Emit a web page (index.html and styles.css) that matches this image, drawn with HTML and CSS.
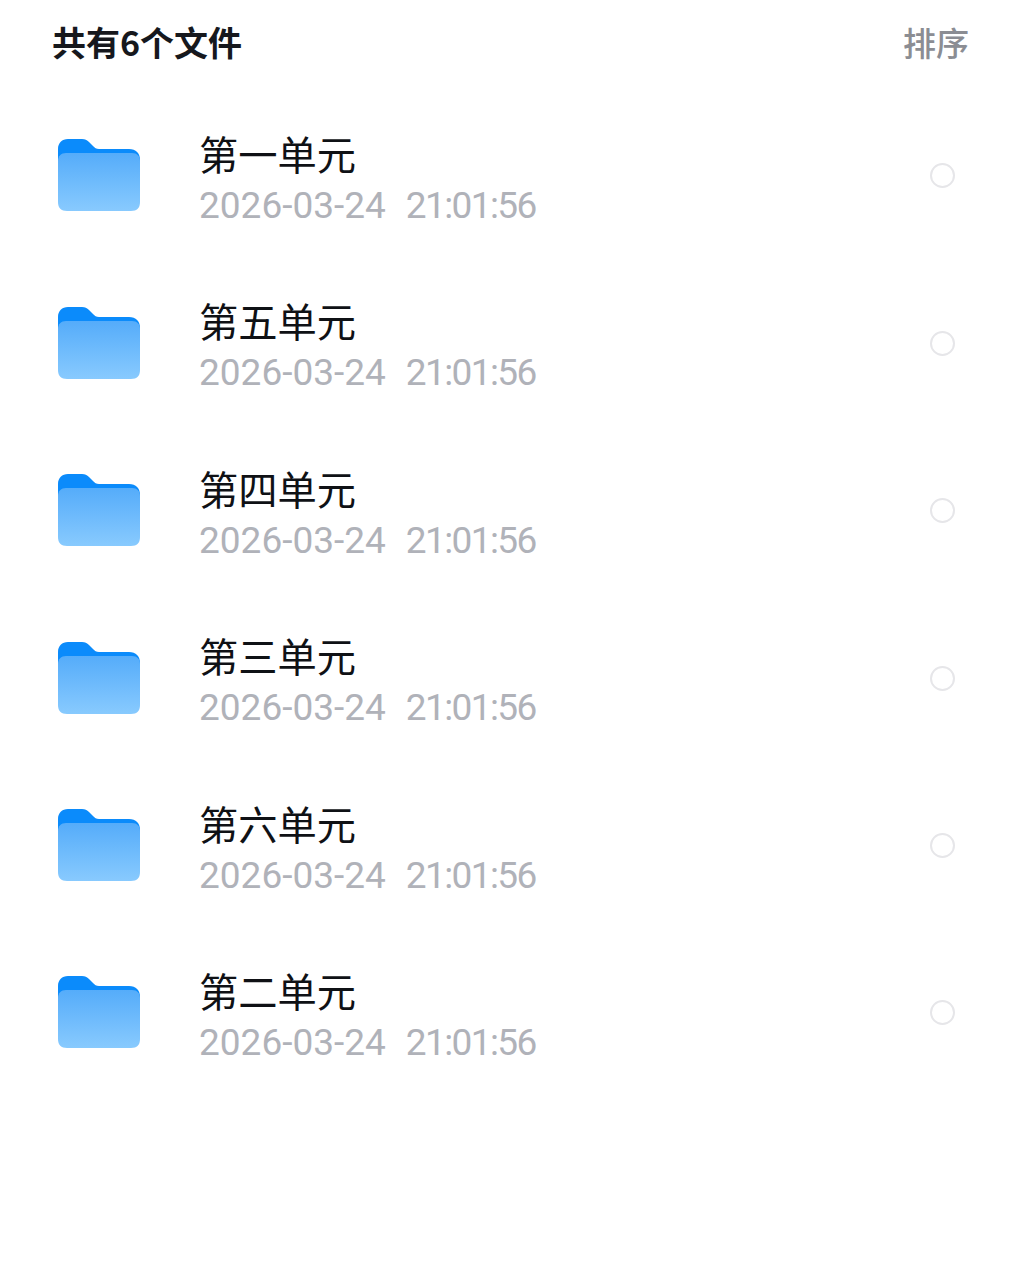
FILE: index.html
```html
<!DOCTYPE html>
<html lang="zh">
<head>
  <meta charset="UTF-8" />
  <meta name="viewport" content="width=device-width, initial-scale=1.0"/>
  <title>文件列表</title>
  <link rel="stylesheet" href="styles.css">
</head>
<body>
  <svg class="defs" width="0" height="0">
    <defs>
      <linearGradient id="folder-front" x1="0" y1="0" x2="0" y2="1">
        <stop offset="0" stop-color="#55acfa"/>
        <stop offset="1" stop-color="#88cafe"/>
      </linearGradient>
      <symbol id="folder" viewBox="0 0 82 72">
        <path fill="#0b8bfb" d="M0 10C0 4 4 0 10 0H24C27 0 29 1 31 3L35 7C37 9 38 10 41 10H71C78 10 82 14 82 21V40H0Z"/>
        <path fill="url(#folder-front)" d="M0 22C0 17 3 14 8 14H74C79 14 82 17 82 22V63C82 69 79 72 73 72H9C3 72 0 69 0 63Z"/>
      </symbol>
    </defs>
  </svg>

  <header class="top">
    <div class="count">共有6个文件</div>
    <div class="sort">排序</div>
  </header>

  <main class="list">
    <div class="row">
      <svg class="folder"><use href="#folder"/></svg>
      <div class="info">
        <div class="name">第一单元</div>
        <div class="date"><span>2026-03-24</span><span class="time">21:01:56</span></div>
      </div>
      <span class="radio"></span>
    </div>
    <div class="row">
      <svg class="folder"><use href="#folder"/></svg>
      <div class="info">
        <div class="name">第五单元</div>
        <div class="date"><span>2026-03-24</span><span class="time">21:01:56</span></div>
      </div>
      <span class="radio"></span>
    </div>
    <div class="row">
      <svg class="folder"><use href="#folder"/></svg>
      <div class="info">
        <div class="name">第四单元</div>
        <div class="date"><span>2026-03-24</span><span class="time">21:01:56</span></div>
      </div>
      <span class="radio"></span>
    </div>
    <div class="row">
      <svg class="folder"><use href="#folder"/></svg>
      <div class="info">
        <div class="name">第三单元</div>
        <div class="date"><span>2026-03-24</span><span class="time">21:01:56</span></div>
      </div>
      <span class="radio"></span>
    </div>
    <div class="row">
      <svg class="folder"><use href="#folder"/></svg>
      <div class="info">
        <div class="name">第六单元</div>
        <div class="date"><span>2026-03-24</span><span class="time">21:01:56</span></div>
      </div>
      <span class="radio"></span>
    </div>
    <div class="row">
      <svg class="folder"><use href="#folder"/></svg>
      <div class="info">
        <div class="name">第二单元</div>
        <div class="date"><span>2026-03-24</span><span class="time">21:01:56</span></div>
      </div>
      <span class="radio"></span>
    </div>
  </main>
</body>
</html>
```

FILE: styles.css
```css
html, body { margin: 0; padding: 0; background: #fff; font-family: "Noto Sans CJK SC", "Noto Sans", sans-serif; }
.defs { display: block; height: 0; }
.top { height: 92.3px; box-sizing: border-box; padding: 0 52px 9px 52px; display: flex; align-items: center; justify-content: space-between; }
.count { font-size: 34px; font-weight: 700; color: #16181d; line-height: 44px; }
.sort { font-size: 33px; font-weight: 500; color: #8b8d93; line-height: 44px; }
.row { height: 167.4px; display: flex; align-items: center; padding: 0 66px 0 58px; }
.folder { width: 82px; height: 72px; flex: none; margin-top: -1px; }
.info { flex: 1; margin-left: 59px; padding-top: 6px; }
.name { font-size: 39.250px; line-height: 50px; color: #0f1115; }
.date { font-family: Roboto, sans-serif; font-size: 37px; line-height: 48px; margin-top: 4px; color: #b0b2b9; }
.time { margin-left: 20px; letter-spacing: -1.600px; }
.radio { width: 25px; height: 25px; box-sizing: border-box; border: 2.500px solid #e6e6e9; border-radius: 50%; flex: none; }
```
